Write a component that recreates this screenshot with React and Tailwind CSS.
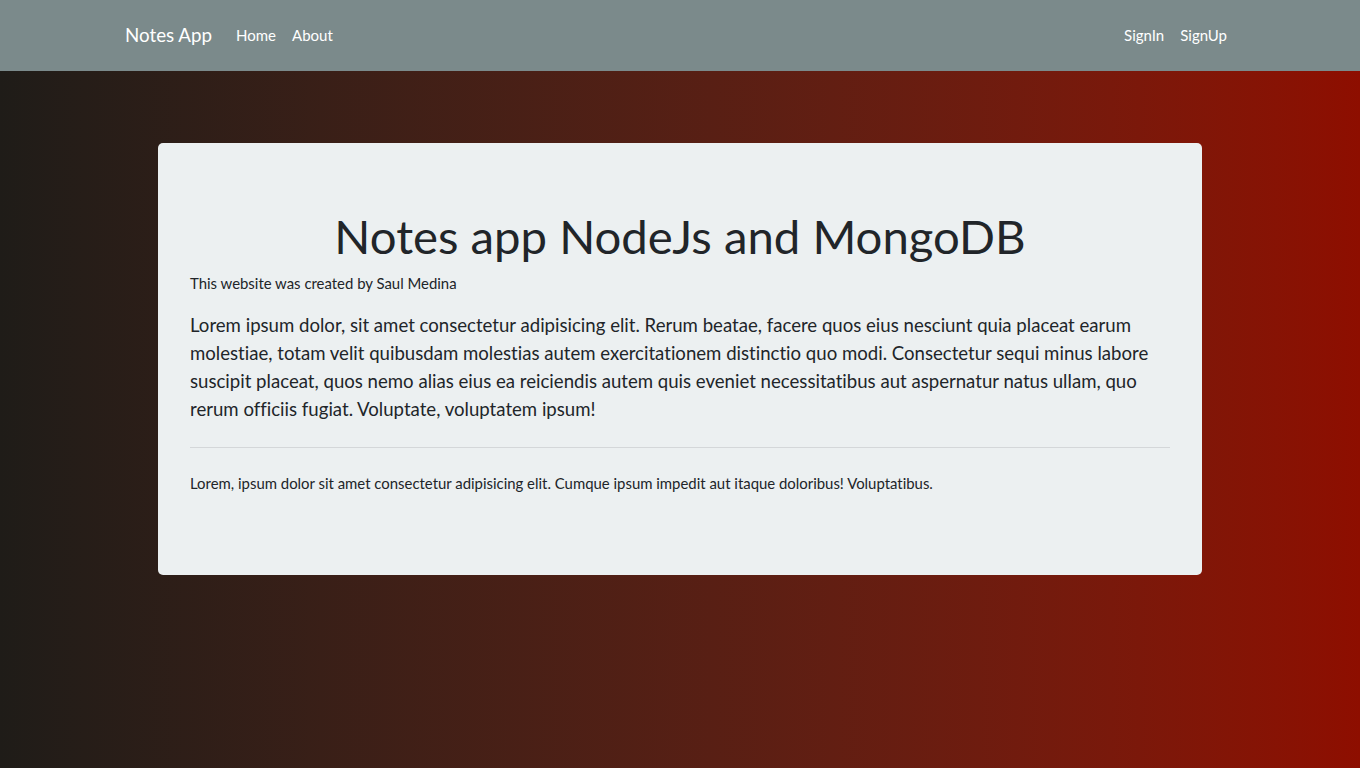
export default function App() {
  return (
    <div className="min-h-screen bg-gradient-to-r from-[#1f1c18] to-[#8e0e00] font-['Lato','Noto_Sans',sans-serif] text-[14.92px] leading-[22.5px] text-[#212529] [font-variant-ligatures:none]">
      <nav className="h-[71px] bg-[#7b8a8b] text-[15px]">
        <div className="mx-auto flex h-full max-w-[1140px] items-center px-[15px]">
          <a href="#" className="mr-4 text-[18.75px] text-white">Notes App</a>
          <div className="flex">
            <a href="#" className="px-2 text-white">Home</a>
            <a href="#" className="px-2 text-white">About</a>
          </div>
          <div className="ml-auto flex">
            <a href="#" className="px-2 text-white">SignIn</a>
            <a href="#" className="px-2 text-white">SignUp</a>
          </div>
        </div>
      </nav>

      <div className="pt-[72px]">
        <div className="mx-auto w-[1044px] rounded-[5px] bg-[#ecf0f1] px-8 pt-16 pb-[65px]">
          <h1 className="mb-[7px] text-center text-[47.3px] leading-[57.6px]">Notes app NodeJs and MongoDB</h1>
          <p>This website was created by Saul Medina</p>
          <p className="mt-[17px] text-[18.6px] leading-[28.125px]">
            Lorem ipsum dolor, sit amet consectetur adipisicing elit. Rerum beatae, facere quos eius nesciunt quia
            placeat earum molestiae, totam velit quibusdam molestias autem exercitationem distinctio quo modi.
            Consectetur sequi minus labore suscipit placeat, quos nemo alias eius ea reiciendis autem quis eveniet
            necessitatibus aut aspernatur natus ullam, quo rerum officiis fugiat. Voluptate, voluptatem ipsum!
          </p>
          <hr className="mt-[23px] mb-6 border-t border-[#d4d7d9]" />
          <p className="mb-4">
            Lorem, ipsum dolor sit amet consectetur adipisicing elit. Cumque ipsum impedit aut itaque doloribus!
            Voluptatibus.
          </p>
        </div>
      </div>
    </div>
  );
}
